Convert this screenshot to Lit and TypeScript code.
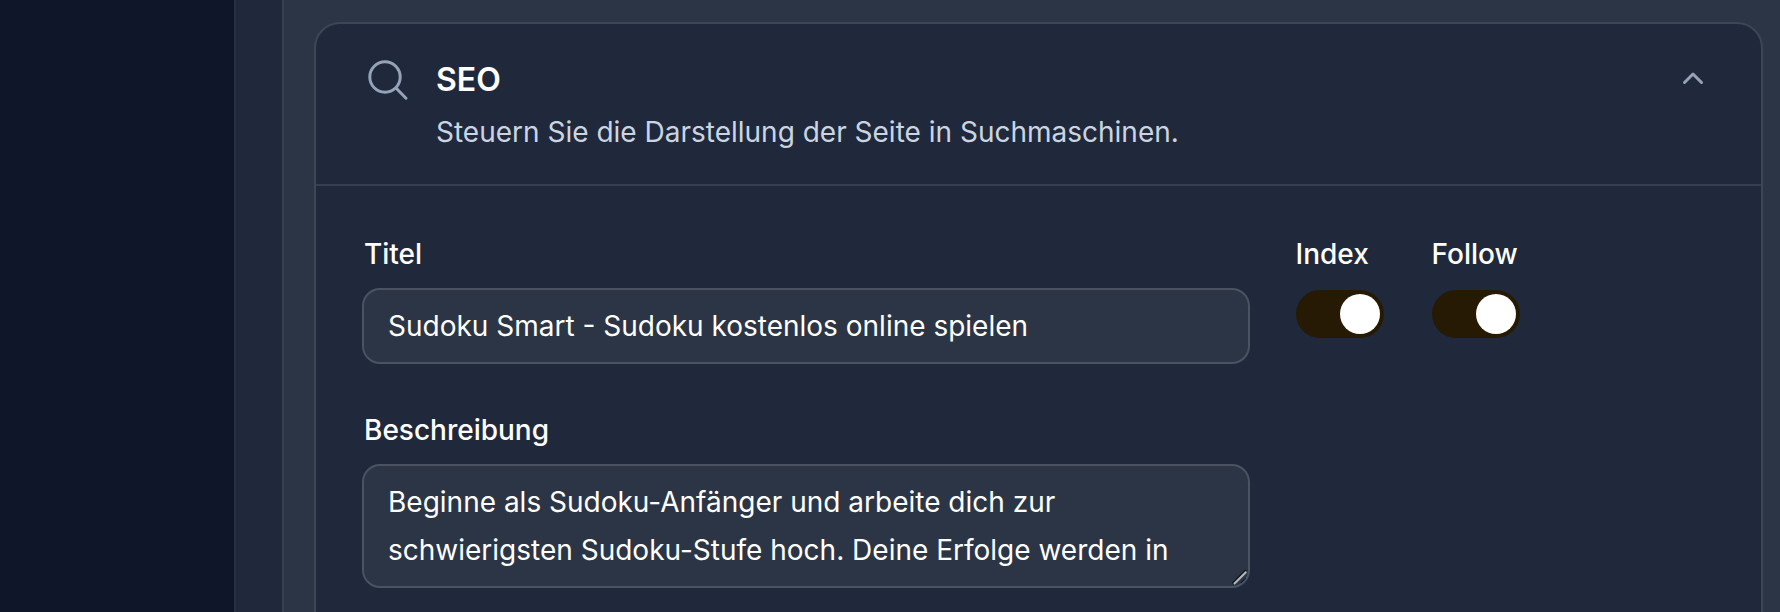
import { LitElement, html, css } from "lit";
import { customElement, property } from "lit/decorators.js";

@customElement("toggle-field")
class ToggleField extends LitElement {
  @property() label = "";
  static styles = css`
    :host { display: block; width: 88px; }
    .label { font-weight: 500; line-height: 40px; white-space: nowrap; margin: 0 0 16px -0.5px; }
    .track { box-sizing: border-box; width: 88px; height: 48px; padding: 4px; border-radius: 24px; background: #261a05; display: flex; justify-content: flex-end; }
    .knob { width: 40px; height: 40px; border-radius: 50%; background: #fff; }
  `;
  render() {
    return html`<div class="label">${this.label}</div>
      <div class="track" role="switch" aria-checked="true"><div class="knob"></div></div>`;
  }
}

@customElement("app-root")
class AppRoot extends LitElement {
  static styles = css`
    * { box-sizing: border-box; }
    :host { display: flex; height: 612px; overflow: hidden; background: #2c3545; color: #fff; font: 400 28px/40px Inter, sans-serif; }
    .sidebar { flex: none; width: 236px; background: #101629; border-right: 2px solid #272f40; }
    .rail { flex: none; width: 48px; background: #20293b; border-right: 2px solid #363f4f; }
    .main { flex: 1; padding: 22px 17px 0 30px; }
    .card { height: 660px; background: #20293b; border: 2px solid #3d4655; border-radius: 26px; }
    .header { display: flex; height: 162px; padding: 32px 52px 0 48px; border-bottom: 2px solid #363f4f; }
    .search { flex: none; width: 48px; height: 48px; margin-right: 24px; }
    .heading { flex: 1; }
    h2 { margin: 0; font-size: 32px; line-height: 48px; font-weight: 600; }
    .heading p { margin: 8px 0 0; line-height: 40px; color: #cbd5e1; }
    .chevron { flex: none; width: 32px; height: 32px; margin-top: 7px; }
    .body { display: flex; gap: 46px; padding: 48px 46px; }
    .fields { width: 888px; }
    .label { font-weight: 500; padding-left: 2px; margin-bottom: 14px; }
    .box { display: block; width: 100%; background: #2c3545; border: 2px solid #4a535f; border-radius: 18px; color: #fff; font: inherit; line-height: 48px; padding: 12px 24px; margin: 0; outline: none; }
    .title { height: 76px; margin-bottom: 46px; }
    .desc { position: relative; height: 124px; overflow: hidden; }
    .grip { position: absolute; right: 0; bottom: 0; width: 20px; height: 20px; }
    .toggles { display: flex; gap: 48px; }
  `;
  render() {
    return html`
      <div class="sidebar"></div>
      <div class="rail"></div>
      <div class="main">
        <section class="card">
          <header class="header">
            <svg class="search" viewBox="0 0 48 48" fill="none" stroke="#94a3b8" stroke-width="3" stroke-linecap="round"><circle cx="21" cy="21" r="15.2"/><path d="M32 32l10 10.2"/></svg>
            <div class="heading">
              <h2>SEO</h2>
              <p>Steuern Sie die Darstellung der Seite in Suchmaschinen.</p>
            </div>
            <svg class="chevron" viewBox="0 0 32 32" fill="none" stroke="#94a3b8" stroke-width="3" stroke-linecap="round" stroke-linejoin="round"><path d="M7.5 19.5l8.5-8.5 8.5 8.5"/></svg>
          </header>
          <div class="body">
            <div class="fields">
              <div class="label">Titel</div>
              <div class="box title">Sudoku Smart - Sudoku kostenlos online spielen</div>
              <div class="label">Beschreibung</div>
              <div class="box desc">Beginne als Sudoku-Anfänger und arbeite dich zur schwierigsten Sudoku-Stufe hoch. Deine Erfolge werden in
                <svg class="grip" viewBox="0 0 20 20" fill="none"><path d="M4.5 17.5L18 4M13 17.5l5-5" stroke="#111722" stroke-width="1.8"/><path d="M6 18L18.3 5.7" stroke="#b5b8bd" stroke-width="2"/></svg>
              </div>
            </div>
            <div class="toggles">
              <toggle-field label="Index"></toggle-field>
              <toggle-field label="Follow"></toggle-field>
            </div>
          </div>
        </section>
      </div>`;
  }
}
